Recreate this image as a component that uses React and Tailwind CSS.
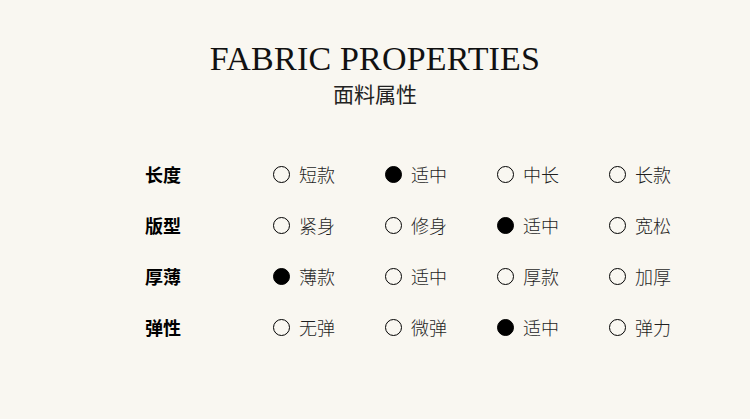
import React from 'react';

const rows = [
  { label: '长度', options: ['短款', '适中', '中长', '长款'], selected: 1 },
  { label: '版型', options: ['紧身', '修身', '适中', '宽松'], selected: 2 },
  { label: '厚薄', options: ['薄款', '适中', '厚款', '加厚'], selected: 0 },
  { label: '弹性', options: ['无弹', '微弹', '适中', '弹力'], selected: 2 },
];

const Radio = ({ checked }) => (
  <span
    className={`w-[17px] h-[17px] rounded-full border-[1.5px] border-black shrink-0 ${
      checked ? 'bg-black' : 'bg-transparent'
    }`}
  />
);

const App = () => {
  return (
    <div className="w-[750px] h-[419px] bg-[#f9f7f1] overflow-hidden font-['Noto_Sans_CJK_SC',sans-serif]">
      {/* Header */}
      <div className="flex flex-col items-center pt-[38px]">
        <h1 className="font-['Liberation_Serif',serif] text-[34px] leading-[42px] text-[#111] tracking-[0.2px]">
          FABRIC PROPERTIES
        </h1>
        <p className="text-[21px] leading-[30px] text-[#222] -mt-[2px]">面料属性</p>
      </div>

      {/* Property grid */}
      <div className="pl-[145px] pt-[41px]">
        {rows.map((row) => (
          <div key={row.label} className="flex items-center h-[51px]">
            <div className="w-[128px] text-[18px] font-bold text-black">{row.label}</div>
            {row.options.map((opt, i) => (
              <div key={opt + i} className="w-[112px] flex items-center gap-[9px]">
                <Radio checked={i === row.selected} />
                <span className="text-[18px] font-light text-[#1f1f1f]">{opt}</span>
              </div>
            ))}
          </div>
        ))}
      </div>
    </div>
  );
};

export default App;
